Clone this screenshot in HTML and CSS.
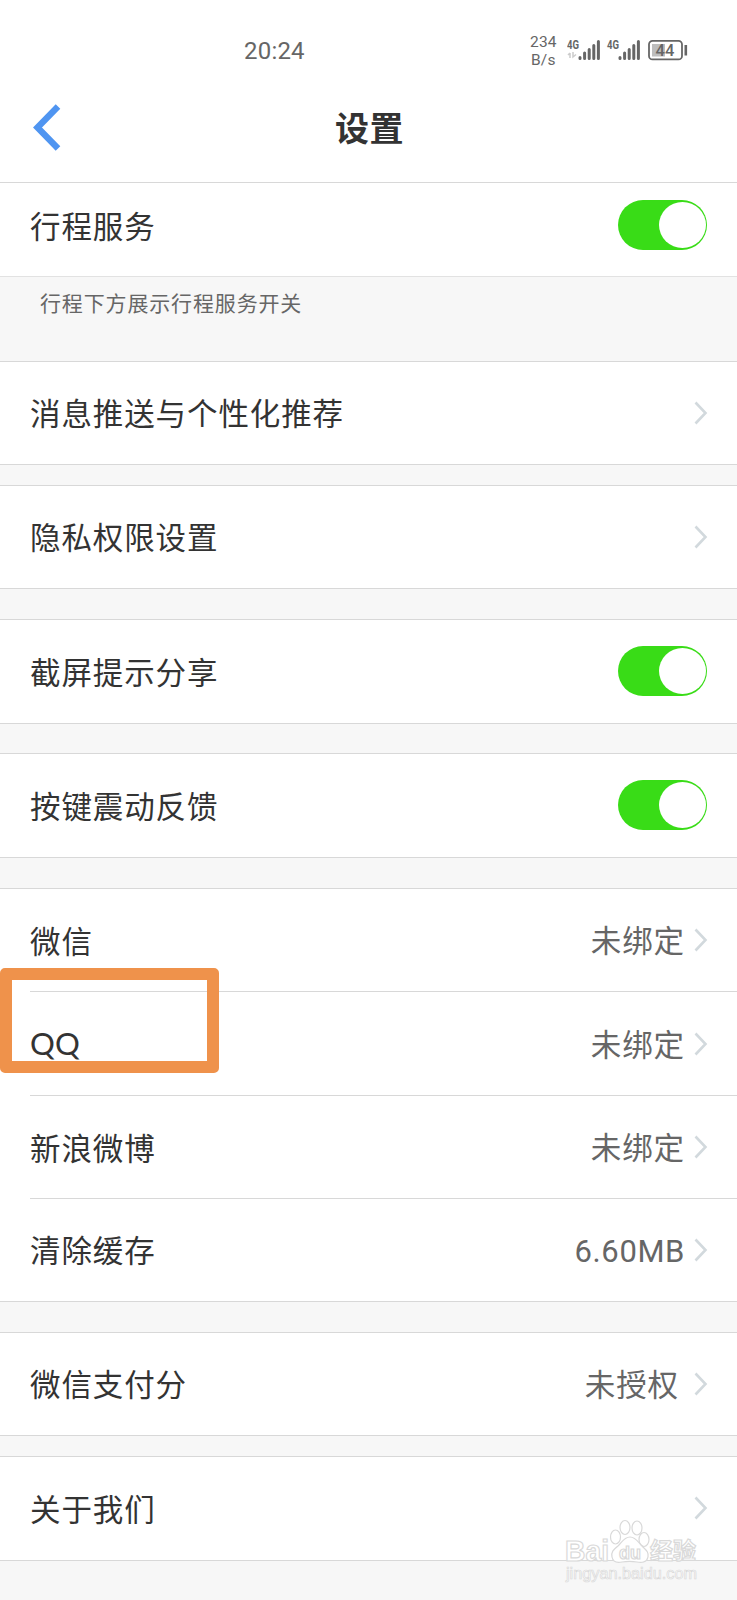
FILE: index.html
```html
<!DOCTYPE html>
<html lang="zh-CN">
<head>
<meta charset="utf-8">
<title>设置</title>
<link rel="stylesheet" href="styles.css">
</head>
<body>
<svg width="0" height="0" class="defs"><defs>
<symbol id="chev" viewBox="0 0 14 24"><path d="M1.5 1.5 11.5 12 1.5 22.5" fill="none" stroke="#d2d9dd" stroke-width="2.6"/></symbol>
</defs></svg>
<div class="screen">
  <header class="top">
    <div class="status">
      <span class="time">20:24</span>
      <span class="speed"><span>234</span><span>B/s</span></span>
      <svg class="signals" width="124" height="24" viewBox="0 0 124 24">
        <g class="net"><text x="0" y="11" textLength="12" lengthAdjust="spacingAndGlyphs">4G</text><text x="40" y="11" textLength="12" lengthAdjust="spacingAndGlyphs">4G</text></g>
        <path d="M3 20V15M1 17l2-2M6 14v5l3-2.500" fill="none" stroke="#ccc" stroke-width="1.500"/>
        <g stroke="#666" stroke-width="3" stroke-linecap="round">
          <path d="M13 20.500v-1M17.600 20.500v-5.500M22.200 20.500v-9M26.800 20.500v-13M31.400 20.500v-17"/>
          <path d="M53 20.500v-1M57.600 20.500v-5.500M62.200 20.500v-9M66.800 20.500v-13M71.400 20.500v-17"/>
        </g>
        <rect x="82" y="2.800" width="33" height="18.600" rx="3.500" fill="#fff" stroke="#666" stroke-width="1.800"/>
        <rect x="85" y="6" width="13" height="12.500" fill="#bdbdbd"/>
        <rect x="117.500" y="7" width="2.600" height="10.500" fill="#666"/>
        <text class="level" x="98" y="18" text-anchor="middle">44</text>
      </svg>
    </div>
    <div class="nav">
      <svg class="back" width="30" height="48" viewBox="0 0 30 48"><path d="M26 2.500 5.500 23.500 26 44.500" fill="none" stroke="#4f95f1" stroke-width="6.400"/></svg>
      <h1>设置</h1>
    </div>
  </header>
  <main>
    <div class="row first"><span>行程服务</span><i class="switch"></i></div>
    <p class="hint">行程下方展示行程服务开关</p>
    <div class="row"><span>消息推送与个性化推荐</span><svg class="chev"><use href="#chev"/></svg></div>
    <div class="gap narrow"></div>
    <div class="row"><span>隐私权限设置</span><svg class="chev"><use href="#chev"/></svg></div>
    <div class="gap"></div>
    <div class="row tall"><span>截屏提示分享</span><i class="switch"></i></div>
    <div class="gap short"></div>
    <div class="row tall"><span>按键震动反馈</span><i class="switch"></i></div>
    <div class="gap"></div>
    <section class="group">
      <div class="row"><span>微信</span><b>未绑定</b><svg class="chev"><use href="#chev"/></svg></div>
      <div class="row tall"><span class="qq">QQ</span><b>未绑定</b><svg class="chev"><use href="#chev"/></svg><div class="marker"></div></div>
      <div class="row"><span>新浪微博</span><b>未绑定</b><svg class="chev"><use href="#chev"/></svg></div>
      <div class="row"><span>清除缓存</span><b class="size">6.60MB</b><svg class="chev"><use href="#chev"/></svg></div>
    </section>
    <div class="gap"></div>
    <div class="row"><span>微信支付分</span><b class="auth">未授权</b><svg class="chev"><use href="#chev"/></svg></div>
    <div class="gap narrow"></div>
    <div class="row tall"><span>关于我们</span><svg class="chev"><use href="#chev"/></svg></div>
    <div class="end"></div>
  </main>
  <svg class="watermark" width="140" height="72" viewBox="0 0 140 72">
    <g fill="#fff" stroke="#d9d9d9" stroke-width="1.200">
      <text class="logo" x="3" y="43" textLength="44" lengthAdjust="spacingAndGlyphs">Bai</text>
      <ellipse cx="53.500" cy="19" rx="5" ry="7"/><ellipse cx="63" cy="9.500" rx="5" ry="7"/><ellipse cx="75" cy="10" rx="5" ry="7"/><ellipse cx="82" cy="21.500" rx="5" ry="7"/>
      <path d="M68 19c-6 0-8 5-12 9-5 4-7 6-6 11 1 5 5 6 10 5 5-.8 10-.8 15 0 5 1 10 0 11-5 1-5-2-7-6-11-4-4-6-9-12-9Z"/>
      <text class="du" x="57" y="41" textLength="22" lengthAdjust="spacingAndGlyphs">du</text>
      <text class="cn" x="88" y="41" textLength="46" lengthAdjust="spacingAndGlyphs">经验</text>
      <text class="url" x="4" y="61" textLength="131" lengthAdjust="spacingAndGlyphs">jingyan.baidu.com</text>
    </g>
  </svg>
</div>
</body>
</html>
```
FILE: styles.css
```css
* { box-sizing: border-box; }
body { margin: 0; background: #fff; font-family: Roboto, "Noto Sans CJK SC", sans-serif; }
.defs { position: absolute; }
.chev, .back, .signals, .switch { flex: none; }
.screen { position: relative; width: 737px; height: 1600px; overflow: hidden; display: flex; flex-direction: column; }
.top, main { flex: none; }
.top { height: 183px; border-bottom: 1px solid #d8d8d8; }
.status { height: 100px; display: flex; align-items: center; padding-left: 244px; color: #666; }
.time { width: 286px; font-size: 24px; letter-spacing: .2px; padding-top: 2px; }
.speed { width: 37px; display: flex; flex-direction: column; padding-top: 2px; font-size: 15.500px; line-height: 18px; letter-spacing: .2px; }
.speed span:last-child { padding-left: 1px; }
.net { font: bold 12.500px Roboto, sans-serif; fill: #666; }
.level { font: 500 16.500px Roboto, sans-serif; fill: #666; }
.nav { height: 56px; display: grid; grid-template-columns: 1fr auto 1fr; align-items: center; padding-left: 32px; padding-right: 30px; }
.nav h1 { margin: 0 0 2px; font: bold 34px/50px "Noto Sans CJK SC", sans-serif; color: #333; letter-spacing: .5px; }
.row { position: relative; height: 103px; padding: 2px 29px 0 30px; display: flex; align-items: center; border-bottom: 1px solid #d8d8d8; background: #fff; }
.row > span { flex: 1; margin-bottom: 4px; font: 30.500px/44px "Noto Sans CJK SC", sans-serif; letter-spacing: .9px; color: #333; }
.row > .qq { margin-bottom: 4px; font-family: Lato, sans-serif; font-size: 31px; letter-spacing: .2px; }
.row b { margin: 0 9px 5px 0; font: 30.500px/44px "Noto Sans CJK SC", sans-serif; letter-spacing: .9px; color: #666; }
.row b.size { font: 31px/44px Roboto, sans-serif; letter-spacing: .6px; margin: 1px 9px 0 0; }
.row b.auth { margin-right: 15px; margin-bottom: 4px; }
.row.tall { height: 104px; }
.row.first { height: 94px; padding-bottom: 8px; padding-top: 0; border-bottom-color: #e2e2e2; }
.row.first > span { margin-bottom: 2px; }
.chev { width: 14px; height: 24px; margin-top: -3px; }
.switch { width: 89px; height: 50px; margin: -3px 1px 0 0; border-radius: 25px; background: #39dc17; padding: 2px 1px; display: flex; justify-content: flex-end; }
.first .switch { margin-top: -1px; }
.switch::after { content: ""; width: 47px; height: 46px; border-radius: 50%; background: #fff; }
.hint { height: 85px; margin: 0; padding: 8px 40px; background: #f7f7f7; border-bottom: 1px solid #d8d8d8; color: #666; font: 21px/34px "Noto Sans CJK SC", sans-serif; letter-spacing: .85px; }
.gap { height: 31px; background: #f7f7f7; border-bottom: 1px solid #d8d8d8; }
.short { height: 30px; }
.narrow { height: 21px; }
.group .row:not(:last-child) { border-bottom: 0; }
.group .row:not(:last-child)::after { content: ""; position: absolute; left: 30px; right: 0; bottom: 0; height: 1px; background: #d8d8d8; }
.marker { position: absolute; z-index: 1; left: 0; top: -24px; width: 219px; height: 105px; border: 12px solid #ef924b; border-radius: 5px; }
.end { height: 50px; background: #f7f7f7; }
.watermark { position: absolute; left: 562px; top: 1518px; }
.logo { font: bold 30px "Liberation Sans", sans-serif; }
.du { font: bold 18px "Liberation Sans", sans-serif; }
.cn { font: bold 23px "Noto Sans CJK SC", sans-serif; }
.url { font: 16px "Liberation Sans", sans-serif; stroke-width: .7px; }
```
